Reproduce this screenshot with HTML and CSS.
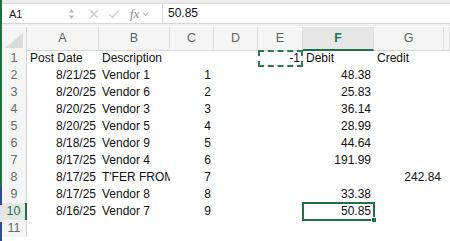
FILE: index.html
```html
<!DOCTYPE html>
<html lang="en">
<head>
  <meta charset="UTF-8" />
  <title>Sheet1</title>
  <link rel="stylesheet" href="styles.css">
</head>
<body>
  <div class="app">
    <div class="edge">
      <div class="edge-green"></div>
      <div class="edge-blue"></div>
      <div class="edge-light"></div>
      <div class="edge-blue"></div>
    </div>
    <div class="main">
      <div class="ribbon-edge"></div>
      <div class="formula-bar">
        <div class="name-box">
          <span>A1</span>
          <svg class="spin" width="7" height="14" viewBox="0 0 7 14">
            <path d="M3.5 2 L6 5.5 L1 5.5 Z" fill="#b5b5b5"/>
            <path d="M3.5 12 L6 8.5 L1 8.5 Z" fill="#b5b5b5"/>
          </svg>
        </div>
        <div class="fx-buttons">
          <svg width="12" height="12" viewBox="0 0 12 12">
            <path d="M2 2 L10 10 M10 2 L2 10" stroke="#c8c8c8" stroke-width="1.2" fill="none"/>
          </svg>
          <svg width="12" height="12" viewBox="0 0 12 12">
            <path d="M1.5 6.5 L4.5 9.5 L10.5 2.5" stroke="#c8c8c8" stroke-width="1.2" fill="none"/>
          </svg>
          <span class="fx">fx</span>
          <svg width="7" height="6" viewBox="0 0 7 6">
            <path d="M1 1.5 L3.5 4.5 L6 1.5" stroke="#b0b0b0" stroke-width="1" fill="none"/>
          </svg>
        </div>
        <div class="formula-input">50.85</div>
      </div>
      <div class="sheet">
        <div class="row head">
          <div class="corner"><span class="tri"></span></div>
          <div class="col-head">A</div>
          <div class="col-head">B</div>
          <div class="col-head">C</div>
          <div class="col-head">D</div>
          <div class="col-head">E</div>
          <div class="col-head active">F</div>
          <div class="col-head">G</div>
          <div class="col-head"></div>
        </div>
        <div class="row">
          <div class="row-head">1</div>
          <div class="cell">Post Date</div>
          <div class="cell">Description</div>
          <div class="cell"></div>
          <div class="cell"></div>
          <div class="cell num copied">-1</div>
          <div class="cell">Debit</div>
          <div class="cell">Credit</div>
          <div class="cell"></div>
        </div>
        <div class="row">
          <div class="row-head">2</div>
          <div class="cell num">8/21/25</div>
          <div class="cell">Vendor 1</div>
          <div class="cell num">1</div>
          <div class="cell"></div>
          <div class="cell"></div>
          <div class="cell num">48.38</div>
          <div class="cell"></div>
          <div class="cell"></div>
        </div>
        <div class="row">
          <div class="row-head">3</div>
          <div class="cell num">8/20/25</div>
          <div class="cell">Vendor 6</div>
          <div class="cell num">2</div>
          <div class="cell"></div>
          <div class="cell"></div>
          <div class="cell num">25.83</div>
          <div class="cell"></div>
          <div class="cell"></div>
        </div>
        <div class="row">
          <div class="row-head">4</div>
          <div class="cell num">8/20/25</div>
          <div class="cell">Vendor 3</div>
          <div class="cell num">3</div>
          <div class="cell"></div>
          <div class="cell"></div>
          <div class="cell num">36.14</div>
          <div class="cell"></div>
          <div class="cell"></div>
        </div>
        <div class="row">
          <div class="row-head">5</div>
          <div class="cell num">8/20/25</div>
          <div class="cell">Vendor 5</div>
          <div class="cell num">4</div>
          <div class="cell"></div>
          <div class="cell"></div>
          <div class="cell num">28.99</div>
          <div class="cell"></div>
          <div class="cell"></div>
        </div>
        <div class="row">
          <div class="row-head">6</div>
          <div class="cell num">8/18/25</div>
          <div class="cell">Vendor 9</div>
          <div class="cell num">5</div>
          <div class="cell"></div>
          <div class="cell"></div>
          <div class="cell num">44.64</div>
          <div class="cell"></div>
          <div class="cell"></div>
        </div>
        <div class="row">
          <div class="row-head">7</div>
          <div class="cell num">8/17/25</div>
          <div class="cell">Vendor 4</div>
          <div class="cell num">6</div>
          <div class="cell"></div>
          <div class="cell"></div>
          <div class="cell num">191.99</div>
          <div class="cell"></div>
          <div class="cell"></div>
        </div>
        <div class="row">
          <div class="row-head">8</div>
          <div class="cell num">8/17/25</div>
          <div class="cell clip">T'FER FROM SAVINGS</div>
          <div class="cell num">7</div>
          <div class="cell"></div>
          <div class="cell"></div>
          <div class="cell"></div>
          <div class="cell num">242.84</div>
          <div class="cell"></div>
        </div>
        <div class="row">
          <div class="row-head">9</div>
          <div class="cell num">8/17/25</div>
          <div class="cell">Vendor 8</div>
          <div class="cell num">8</div>
          <div class="cell"></div>
          <div class="cell"></div>
          <div class="cell num">33.38</div>
          <div class="cell"></div>
          <div class="cell"></div>
        </div>
        <div class="row">
          <div class="row-head active">10</div>
          <div class="cell num">8/16/25</div>
          <div class="cell">Vendor 7</div>
          <div class="cell num">9</div>
          <div class="cell"></div>
          <div class="cell"></div>
          <div class="cell num selected">50.85</div>
          <div class="cell"></div>
          <div class="cell"></div>
        </div>
        <div class="row">
          <div class="row-head">11</div>
          <div class="cell"></div>
          <div class="cell"></div>
          <div class="cell"></div>
          <div class="cell"></div>
          <div class="cell"></div>
          <div class="cell"></div>
          <div class="cell"></div>
          <div class="cell"></div>
        </div>
      </div>
    </div>
  </div>
</body>
</html>
```

FILE: styles.css
```css
body {
  margin: 0;
  padding: 0;
  background-color: #ffffff;
  font-family: 'Liberation Sans', Arial, sans-serif;
  color: #000000;
  overflow: hidden;
}

.app {
  display: flex;
  flex-direction: row;
  height: 241px;
}

.edge {
  width: 3px;
  display: flex;
  flex-direction: column;
}

.edge-green {
  height: 186px;
  background-color: #1f6f41;
}

.edge-blue {
  flex: 1;
  background-color: #2d4f8f;
}

.edge-light {
  height: 17px;
  background-color: #dfe6ef;
}

.main {
  flex: 1;
  display: flex;
  flex-direction: column;
}

.ribbon-edge {
  height: 3px;
  background-color: #ececec;
  border-bottom: 1px solid #d9d9d9;
}

.formula-bar {
  height: 19px;
  display: flex;
  align-items: center;
  border-bottom: 1px solid #d6d6d6;
  box-shadow: 0 2px 0 #f1f1f1;
  margin-bottom: 3px;
}

.name-box {
  width: 66px;
  display: flex;
  align-items: center;
  justify-content: space-between;
  padding: 0 4px 0 7px;
  font-size: 11px;
  color: #1a1a1a;
}

.spin {
  display: block;
}

.fx-buttons {
  width: 74px;
  display: flex;
  align-items: center;
  gap: 8px;
  padding-left: 9px;
}

.fx {
  font-family: 'Liberation Serif', 'Times New Roman', serif;
  font-style: italic;
  font-size: 13px;
  color: #8a8a8a;
  margin-left: 2px;
  margin-right: -5px;
}

.formula-input {
  flex: 1;
  height: 19px;
  line-height: 19px;
  border-left: 1px solid #dcdcdc;
  padding-left: 5px;
  font-size: 12px;
  color: #111111;
}

.sheet {
  display: flex;
  flex-direction: column;
}

.row {
  display: grid;
  grid-template-columns: 25px 72px 71px 44px 44px 45px 71px 70px 1fr;
  height: 17px;
  line-height: 17px;
  font-size: 12px;
}

.row.head {
  height: 23px;
  line-height: 22px;
  background-color: #f5f5f5;
}

.corner {
  position: relative;
  border-right: 1px solid #d6d6d6;
}

.tri {
  position: absolute;
  right: 3px;
  bottom: 3px;
  width: 0;
  height: 0;
  border-left: 18px solid transparent;
  border-bottom: 15px solid #dadada;
}

.col-head {
  text-align: center;
  font-size: 12.5px;
  color: #5f5f5f;
  border-right: 1px solid #dedede;
  border-bottom: 1px solid #d6d6d6;
}

.col-head.active {
  background-color: #e6e6e6;
  color: #1e7145;
  font-weight: bold;
  border-bottom: 2px solid #1e7145;
}

.row-head {
  text-align: center;
  font-size: 12.5px;
  color: #6a6a6a;
  background-color: #f5f5f5;
  border-right: 1px solid #d6d6d6;
}

.row-head.active {
  background-color: #e6e6e6;
  color: #1e7145;
  border-right: 2px solid #1e7145;
}

.cell {
  padding: 0 3px;
  white-space: nowrap;
  overflow: hidden;
  color: #111111;
}

.cell.clip {
  padding-right: 2px;
  text-overflow: clip;
}

.cell.num {
  text-align: right;
}

.copied {
  outline: 2px dashed #2a7a4d;
  outline-offset: -2px;
  position: relative;
}

.selected {
  position: relative;
  overflow: visible;
  outline: 2px solid #1e7145;
  outline-offset: -1px;
}

.selected::after {
  content: '';
  position: absolute;
  right: -3px;
  bottom: -3px;
  width: 4px;
  height: 4px;
  background-color: #1e7145;
  border: 1px solid #ffffff;
}
```
